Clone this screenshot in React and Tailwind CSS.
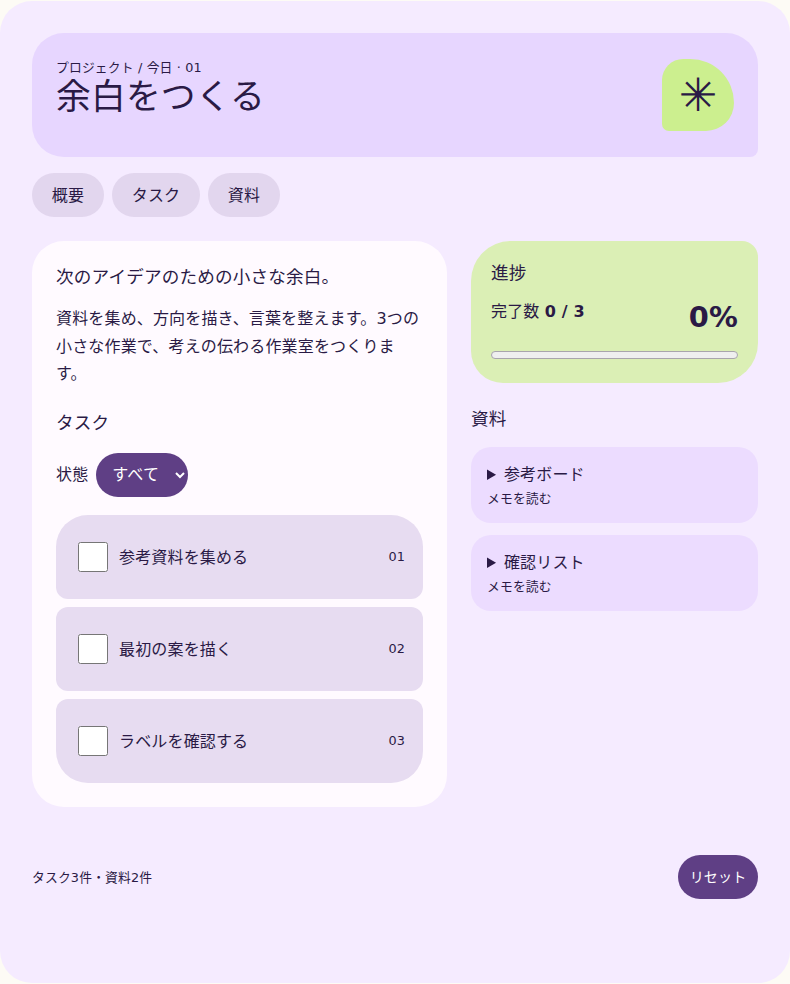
import React from 'react';

const tabs = ['概要', 'タスク', '資料'];
const tasks = [
  { label: '参考資料を集める', no: '01', corner: 'rounded-t-[32px] rounded-b-[12px]' },
  { label: '最初の案を描く', no: '02', corner: 'rounded-[12px]' },
  { label: 'ラベルを確認する', no: '03', corner: 'rounded-t-[12px] rounded-b-[32px]' },
];
const notes = ['参考ボード', '確認リスト'];

const App = () => {
  return (
    <div className="min-h-[984px] bg-[#fdfbf5] text-[#2a1a45] tracking-[0.01em] font-['DejaVu_Sans','Noto_Sans_CJK_JP',sans-serif]">
      <div className="h-[983px] pt-px">
        <div className="h-[982px] rounded-[32px] bg-[#f5ebff] p-8">
          <header className="h-[124px] rounded-t-[32px] rounded-bl-[32px] rounded-br-[8px] bg-[#e7d6ff] px-6 py-[26px] flex justify-between">
            <div>
              <p className="text-[12.8px] leading-[17px]">プロジェクト / 今日 · 01</p>
              <h1 className="text-[34.8px] leading-[42px]">余白をつくる</h1>
            </div>
            <div className="w-[72px] h-[72px] rounded-tl-[24px] rounded-tr-[50px] rounded-br-[32px] rounded-bl-[8px] bg-[#ccef8f] flex items-center justify-center text-[46px] tracking-normal">
              ✳
            </div>
          </header>

          <nav className="flex gap-2 mt-4">
            {tabs.map((t) => (
              <button key={t} className="h-11 w-[72px] [&:nth-child(2)]:w-[88px] pt-0.5 rounded-[22px] bg-[#e2d6ee] text-[16px]">{t}</button>
            ))}
          </nav>

          <main className="grid grid-cols-[415px_287px] gap-6 mt-6 items-start">
            <section className="h-[566px] rounded-[32px] bg-[#fffaff] p-6">
              <h2 className="text-[17.6px] leading-[24px]">次のアイデアのための小さな余白。</h2>
              <p className="mt-4 text-[16px] leading-[27.5px]">資料を集め、方向を描き、言葉を整えます。3つの小さな作業で、考えの伝わる作業室をつくります。</p>
              <h2 className="mt-[23px] text-[17.6px] leading-[24px]">タスク</h2>
              <div className="flex items-center gap-2 mt-[18px]">
                <label className="text-[16px]">状態</label>
                <select className="h-11 w-[92px] pl-3 pr-2 rounded-[22px] bg-[#5f3f85] text-white text-[16px]">
                  <option>すべて</option>
                </select>
              </div>
              <ul className="flex flex-col gap-2 mt-[18px]">
                {tasks.map((t) => (
                  <li key={t.no} className={`h-[84px] flex items-center px-[22px] gap-[11px] bg-[#e7dcf1] ${t.corner}`}>
                    <input type="checkbox" className="w-[30px] h-[30px]" />
                    <span className="flex-1 text-[16px] pt-0.5">{t.label}</span>
                    <span className="text-[12.8px] mr-[-4px]">{t.no}</span>
                  </li>
                ))}
              </ul>
            </section>

            <aside>
              <div className="h-[142px] rounded-tl-[40px] rounded-tr-[16px] rounded-br-[40px] rounded-bl-[32px] bg-[#dbefb5] px-5 pt-5">
                <h2 className="text-[17.6px] leading-[24px]">進捗</h2>
                <div className="flex justify-between mt-[15px]">
                  <span className="text-[16px]">完了数 <b>0 / 3</b></span>
                  <b className="text-[28.8px] leading-[34px]">0%</b>
                </div>
                <div role="progressbar" className="h-2 mt-[17px] rounded-[4px] border border-[#a9a5ad] bg-[#efefef]"></div>
              </div>
              <h2 className="mt-6 text-[17.6px] leading-[24px]">資料</h2>
              <div className="flex flex-col gap-3 mt-4">
                {notes.map((n) => (
                  <details key={n} className="h-[76px] rounded-[20px] bg-[#ecdcff] px-4 pt-[17px]">
                    <summary className="text-[16px] leading-[22px]">
                      {n}
                      <small className="block text-[12.8px] leading-[18px] mt-1">メモを読む</small>
                    </summary>
                  </details>
                ))}
              </div>
            </aside>
          </main>

          <footer className="flex justify-between items-center mt-12">
            <span className="text-[12.8px] pt-0.5">タスク3件・資料2件</span>
            <button className="h-11 w-20 rounded-[22px] bg-[#5f3f85] text-white text-[14px]">リセット</button>
          </footer>
        </div>
      </div>
    </div>
  );
};

export default App;
